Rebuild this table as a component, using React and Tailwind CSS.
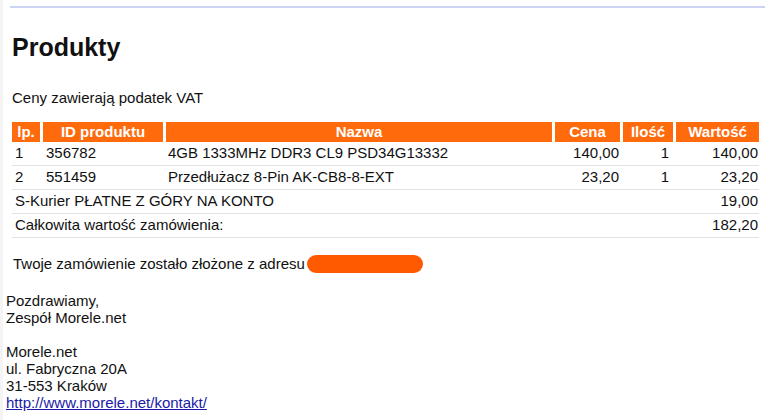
const rows = [
  { lp: "1", id: "356782", name: "4GB 1333MHz DDR3 CL9 PSD34G13332", price: "140,00", qty: "1", total: "140,00" },
  { lp: "2", id: "551459", name: "Przedłużacz 8-Pin AK-CB8-8-EXT", price: "23,20", qty: "1", total: "23,20" },
];

const cols = "grid grid-cols-[28px_120px_386px_65px_50px_83px] gap-x-[3px]";

export default function App() {
  return (
    <div className="w-[765px] h-[420px] overflow-hidden bg-white border-l-[3px] border-[#f4f4f4] text-[#111] font-['Liberation_Sans',Arial,sans-serif] text-[15px]">
      {/* top rule */}
      <div className="ml-[7px] mt-[6px] h-[2px] bg-[#cdd4f2]" />

      <div className="pl-[9px]">
        <h1 className="mt-[24px] text-[25px] leading-[30px] font-bold">Produkty</h1>

        <p className="mt-[27px] leading-[18px]">Ceny zawierają podatek VAT</p>

        {/* products table */}
        <div className="mt-[15px] w-[747px]">
          <div className={`${cols} h-[20px] text-white font-bold leading-[20px] text-center`}>
            <div className="bg-[#ff6a0d]">lp.</div>
            <div className="bg-[#ff6a0d]">ID produktu</div>
            <div className="bg-[#ff6a0d]">Nazwa</div>
            <div className="bg-[#ff6a0d]">Cena</div>
            <div className="bg-[#ff6a0d]">Ilość</div>
            <div className="bg-[#ff6a0d]">Wartość</div>
          </div>

          {rows.map((r) => (
            <div key={r.id} className={`${cols} h-[24px] items-center border-b border-[#e3e3e3]`}>
              <div className="pl-[3px]">{r.lp}</div>
              <div className="pl-[3px]">{r.id}</div>
              <div className="pl-[2px]">{r.name}</div>
              <div className="text-right pr-[1px]">{r.price}</div>
              <div className="text-right pr-[4px]">{r.qty}</div>
              <div className="text-right pr-[1px]">{r.total}</div>
            </div>
          ))}

          <div className="flex h-[24px] items-center justify-between border-b border-[#e3e3e3] pl-[3px] pr-[1px]">
            <span>S-Kurier PŁATNE Z GÓRY NA KONTO</span>
            <span>19,00</span>
          </div>
          <div className="flex h-[24px] items-center justify-between border-b border-[#e3e3e3] pl-[3px] pr-[1px]">
            <span>Całkowita wartość zamówienia:</span>
            <span>182,20</span>
          </div>
        </div>

        <div className="mt-[16px] flex items-center h-[20px] pl-[1px]">
          <span>Twoje zamówienie zostało złożone z adresu</span>
          <span className="ml-[2px] inline-block w-[116px] h-[18px] rounded-full bg-[#ff5a00]" />
        </div>
      </div>

      {/* signature */}
      <div className="pl-[3px] mt-[18px] leading-[17px]">
        <p>Pozdrawiamy,</p>
        <p>Zespół Morele.net</p>
        <p className="mt-[17px]">Morele.net</p>
        <p>ul. Fabryczna 20A</p>
        <p>31-553 Kraków</p>
        <a href="#" className="text-[#1a1aa6] underline">http://www.morele.net/kontakt/</a>
      </div>
    </div>
  );
}
